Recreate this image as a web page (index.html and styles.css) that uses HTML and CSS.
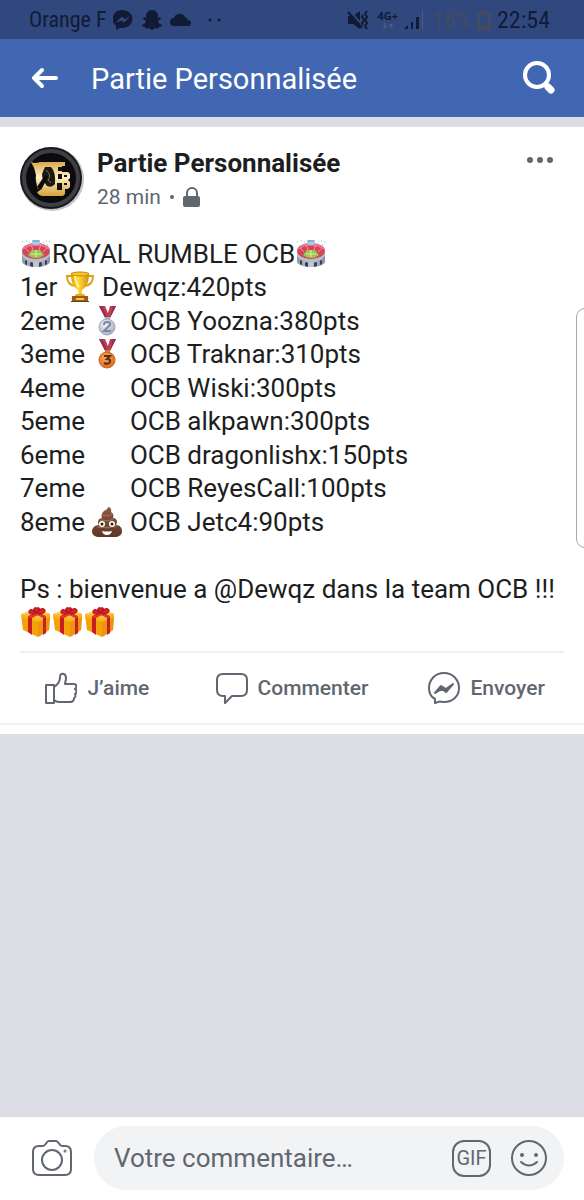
FILE: index.html
```html
<!DOCTYPE html>
<html lang="fr">
<head>
<meta charset="utf-8">
<meta name="viewport" content="width=device-width, initial-scale=1">
<title>Partie Personnalisée</title>
<link rel="stylesheet" href="styles.css">
</head>
<body>
<svg class="sprite" aria-hidden="true">
  <defs>
    <linearGradient id="gold" x1="0" x2="1"><stop offset="0" stop-color="#e09a06"/><stop offset=".4" stop-color="#ffe03c"/><stop offset="1" stop-color="#d98b05"/></linearGradient>
    <linearGradient id="logoGold" x1="0" x2="0" y1="0" y2="1"><stop offset="0" stop-color="#d9a84a"/><stop offset=".45" stop-color="#fff0c4"/><stop offset="1" stop-color="#d6a03c"/></linearGradient>
    <linearGradient id="wall" x1="0" x2="1"><stop offset="0" stop-color="#8d97a3"/><stop offset=".5" stop-color="#c3cad2"/><stop offset="1" stop-color="#858f9c"/></linearGradient>
    <radialGradient id="silver" cx=".4" cy=".35" r=".7"><stop offset="0" stop-color="#eef1f7"/><stop offset="1" stop-color="#a5adbd"/></radialGradient>
    <radialGradient id="bronze" cx=".4" cy=".35" r=".7"><stop offset="0" stop-color="#ffa54d"/><stop offset="1" stop-color="#d9691c"/></radialGradient>
    <linearGradient id="brown" x1="0" x2="0" y1="0" y2="1"><stop offset="0" stop-color="#8e5b42"/><stop offset="1" stop-color="#5f3625"/></linearGradient>
  </defs>
  <symbol id="stadium" viewBox="0 0 32 32">
    <path d="M2 14v10c1 3 7 5 14 5s13-2 14-5V14z" fill="url(#wall)"/>
    <ellipse cx="16" cy="13" rx="14" ry="8" fill="#d5455c"/>
    <path d="M2 13c0-4 6-8 14-8s14 4 14 8c-2-3-7-5-14-5S4 10 2 13z" fill="#ec7486"/>
    <path d="M5 10l4 4M11 6l2 6M21 6l-2 6M27 10l-4 4" stroke="#f0939f"/>
    <path d="M8 17l4-5h8l4 5c-2 2-5 3-8 3s-6-1-8-3z" fill="#9cc653"/>
    <path d="M11 16h10M16 12v7" stroke="#d6f09a"/>
    <path d="M2 14c1 4 7 7 14 7s13-3 14-7v3c-1 4-7 7-14 7S3 21 2 17z" fill="#b7bec8"/>
    <path d="M5 26v-3q1-2 2 0v4zM10 28v-3q2-2 3 0v4zM19 29v-4q2-2 3 0v3zM25 27v-4q1-2 2 0v3z" fill="#35415a"/>
    <path d="M12 2h8v4q-4 2-8 0z" fill="#a7cde6"/><path d="M13 2h6v2h-6z" fill="#7fb3d8"/>
    <path d="M2 4h1M6 3h1M26 3h1M29 4h1M4 8h1M27 7h1M9 4h1M23 4h1" stroke="#6cc9be"/>
  </symbol>
  <symbol id="gift" viewBox="0 0 32 32">
    <path d="M1 9l17-5 12 4-1 16-11 7L3 24z" fill="#f4a20b"/>
    <path d="M18 13l12-4-1 15-11 7z" fill="#e9960c"/>
    <path d="M1 8l15-5 14 5-12 5z" fill="#ffc83a"/>
    <path d="M1 8l17 5v3L1 11zM18 13l12-5v3l-12 5z" fill="#ffb31c"/>
    <path d="M8 10l4 2v17l-4-3zM23 12l3-2v17l-3 2z" fill="#c91d22"/>
    <path d="M8 10l12-6 4 2-12 6zM9 5l4-1 13 6-3 2z" fill="#e43230"/>
    <path d="M16 7C12 9 8 8 9 5c1-3 5-1 7 2zM17 7c1-4 7-6 8-3s-4 5-8 3zM15 6c-3-4 0-5 2-4 2-1 4 0 1 4z" fill="#d91f2a" stroke="#a3141e"/>
  </symbol>
</svg>

<header class="top">
  <div class="status">
    <span class="carrier">Orange F</span>
    <svg class="s-chat" viewBox="0 0 20 20"><path d="M10 0a10 9 0 0 0-7 15.800V20l4-2.300A10 9 0 1 0 10 0z" fill="currentColor"/><path d="M4 12l5-5 3 3 4-3-5 5-3-2z" fill="#30487e" stroke="#30487e"/></svg>
    <svg class="s-ghost" viewBox="0 0 20 20"><path d="M10 0C6 0 4 3 4 6v2L2 7 1 9l3 2c0 2-2 3-4 4 0 2 2 2 3 2l1 2 3-1c1 1 2 2 3 2s2-1 3-2l3 1 1-2c1 0 3 0 3-2-2-1-4-2-4-4l3-2-1-2-2 1V6c0-3-2-6-6-6z" fill="currentColor"/></svg>
    <svg class="s-cloud" viewBox="0 0 22 14"><path d="M4 13a4 4 0 0 1 0-8 6 6 0 0 1 11-1 5 5 0 0 1 3 3 3 3 0 0 1 0 6z" fill="currentColor"/></svg>
    <svg class="s-dots" viewBox="0 0 14 4"><circle cx="2" cy="2" r="1.600" fill="currentColor"/><circle cx="11" cy="2" r="1.600" fill="currentColor"/></svg>
    <span class="grow"></span>
    <svg class="s-mute" viewBox="0 0 22 20"><path d="M1 6h5l7-5v18l-7-5H1z" fill="currentColor"/><path d="M2 0l15 17" stroke="#30487e" stroke-width="2"/><path d="M1 2l14 16" stroke="currentColor" stroke-width="2"/><path d="M16 5l-1 2 2 3-2 3 1 2M20 1l-2 3 2 3-2 3 2 3-2 3 2 3" fill="none" stroke="currentColor" stroke-width="2"/></svg>
    <span class="network">4G+<svg viewBox="0 0 12 6"><path d="M3 0v5M1 3l2 2 2-2M9 6V1M7 3l2-2 2 2" stroke="#53638b" fill="none"/></svg></span>
    <svg class="s-signal" viewBox="0 0 20 20"><path d="M0 19l4-4v4zM7 12h2v7H7zM12 7h3v12h-3z" fill="currentColor"/><path d="M18 1h1v18h-1z" fill="#4c5b80"/></svg>
    <span class="percent">18%</span>
    <svg class="s-battery" viewBox="0 0 14 20"><path d="M4 0h6v2h4v18H0V2h4zM3 5v10h8V5z" fill="#434b63" fill-rule="evenodd"/></svg>
    <time class="clock">22:54</time>
  </div>
  <nav class="bar">
    <button class="icon-btn" aria-label="Retour"><svg class="back" viewBox="0 0 28 22"><path d="M11 3L3 11l8 8M4 11h21" fill="none" stroke="#fff" stroke-width="4" stroke-linecap="round" stroke-linejoin="round"/></svg></button>
    <h1>Partie Personnalisée</h1>
    <button class="icon-btn" aria-label="Rechercher"><svg class="search" viewBox="0 0 34 34"><circle cx="15" cy="14" r="12" fill="none" stroke="#fff" stroke-width="4"/><path d="M22 22l3 3" stroke="#fff" stroke-width="4"/><path d="M26 26l3 3" stroke="#fff" stroke-width="7" stroke-linecap="round"/></svg></button>
  </nav>
</header>

<main class="feed">
  <article class="post">
    <div class="author">
      <svg class="avatar" viewBox="0 0 64 64" role="img" aria-label="OCB"><circle cx="32" cy="32" r="32" fill="#c3c5c9"/><circle cx="31" cy="31" r="31" fill="#17181b"/><circle cx="31" cy="31" r="27" fill="#0b0b0d" stroke="#3d3f44" stroke-width="4"/><path d="M11 15q4 2 9 0h25v4h-3v6h6l2 2v4l-2 2 2 2v5l-2 2h-3v5l-2 2H23q-4 0-6-4 4-1 4-6l-3 3q-3-9-2-14-1-7-5-13z" fill="url(#logoGold)"/><path d="M25 20h6q5 5 4 17-3 4-8 2-5-6-5-12z" fill="#1b1914"/><path d="M17 40l8-12 3 2-7 13z" fill="#0b0b0d"/><path d="M26 23q6 5 2 10l3 3" fill="none" stroke="#81765b"/><path d="M38 20h4v4h-4zM38 27h4v5h-4zM37 36h5v7h-5zM44 28h3v2h-3zM44 36h3v2h-3z" fill="#111"/></svg>
      <div class="who">
        <h2>Partie Personnalisée</h2>
        <div class="meta">28 min <span class="dot"></span><svg class="lock" viewBox="0 0 18 20"><path d="M4 10V6a5 5 0 0 1 10 0v4" fill="none" stroke="#616770" stroke-width="2"/><rect y="9" width="17" height="11" rx="2" fill="#616770"/></svg></div>
      </div>
      <button class="icon-btn more" aria-label="Plus"><svg viewBox="0 0 26 6"><circle cx="3" cy="3" r="3"/><circle cx="13" cy="3" r="3"/><circle cx="23" cy="3" r="3"/></svg></button>
    </div>

    <div class="message">
      <p><svg class="emoji"><use href="#stadium"/></svg>ROYAL RUMBLE OCB<svg class="emoji"><use href="#stadium"/></svg></p>
      <p>1er <svg class="emoji" viewBox="0 0 32 32"><path d="M8 5H3q0 9 8 10M24 5h5q0 9-8 10" fill="none" stroke="#dda211" stroke-width="2"/><path d="M7 2h18c0 9-2 14-7 17v6h-4v-6C9 16 7 11 7 2z" fill="url(#gold)"/><ellipse cx="16" cy="3" rx="9" ry="2" fill="#f6c526" stroke="#c9880a"/><path d="M11 5q1 8 4 11" stroke="#fff6a0" stroke-width="2" fill="none"/><path d="M12 23h8l2 3H10z" fill="#eaa91d"/><path d="M8 25h16v6H8z" fill="#9b5a18"/><path d="M12 27h8v2h-8z" fill="#f7cb47"/><path d="M7 30h18v1H7z" fill="#6b3b11"/></svg> Dewqz:420pts</p>
      <p>2eme <svg class="emoji" viewBox="0 0 32 32"><path d="M8 1h6l3 7 2-7h6l-6 12h-5z" fill="#b93f58"/><path d="M8 1h3l5 11h-2zM22 1h3l-6 12" fill="#9a2c48"/><path d="M14 12h5v3h-5z" fill="#a5adbd"/><circle cx="16" cy="22" r="8" fill="url(#silver)" stroke="#a3abbb"/><path d="M13 20q0-3 3-3 4 0 3 3l-6 6h7" fill="none" stroke="#7c879f" stroke-width="2"/></svg> OCB Yoozna:380pts</p>
      <p>3eme <svg class="emoji" viewBox="0 0 32 32"><path d="M8 1h6l3 7 2-7h6l-6 12h-5z" fill="#b93f58"/><path d="M8 1h3l5 11h-2zM22 1h3l-6 12" fill="#9a2c48"/><path d="M14 12h5v3h-5z" fill="#d87a2c"/><circle cx="16" cy="22" r="8" fill="url(#bronze)" stroke="#c9652a"/><path d="M13 18h6l-3 3q4 0 3 3-2 3-6 1" fill="none" stroke="#59301f" stroke-width="2"/></svg> OCB Traknar:310pts</p>
      <p>4eme <span class="emoji"></span> OCB Wiski:300pts</p>
      <p>5eme <span class="emoji"></span> OCB alkpawn:300pts</p>
      <p>6eme <span class="emoji"></span> OCB dragonlishx:150pts</p>
      <p>7eme <span class="emoji"></span> OCB ReyesCall:100pts</p>
      <p>8eme <svg class="emoji" viewBox="0 0 32 32"><path d="M17 1c0 3-5 3-6 7-1 2 0 4 0 4-4 0-5 5-3 7-5 0-7 4-7 6 0 4 3 6 8 6h14c5 0 8-2 8-6 0-3-2-6-6-6 2-3 1-7-3-7 1-3 0-5-2-6 1-3-1-5-3-5z" fill="url(#brown)"/><path d="M12 9q6 2 9-1M9 14q9 2 13-1M6 21q10 2 20-1" fill="none" stroke="#a5745a"/><circle cx="11" cy="18" r="3" fill="#fff"/><circle cx="21" cy="18" r="3" fill="#fff"/><circle cx="11" cy="18" r="1.500" fill="#222"/><circle cx="21" cy="18" r="1.500" fill="#222"/><path d="M11 25q5 1 10 0-1 4-5 4t-5-4z" fill="#fff"/></svg> OCB Jetc4:90pts</p>
      <p class="blank"></p>
      <p>Ps : bienvenue a @Dewqz dans la team OCB !!!</p>
      <p><svg class="emoji"><use href="#gift"/></svg><svg class="emoji"><use href="#gift"/></svg><svg class="emoji"><use href="#gift"/></svg></p>
    </div>
  </article>
  <div class="actions">
    <button><svg viewBox="0 0 32 32"><path d="M1 13h8v18H1zM9 15c5-3 6-6 6-10 0-5 6-4 6 1 0 3-1 4-1 6h9c3 0 3 4 1 5 2 1 2 4 0 5 1 2 0 4-1 4 0 3-1 4-4 4H14c-2 0-4-1-5-2"/></svg>J’aime</button>
    <button><svg viewBox="0 0 32 32"><path d="M7 2h18q6 0 6 6v10q0 6-6 6h-9l-7 7v-7H7q-6 0-6-6V8q0-6 6-6z"/></svg>Commenter</button>
    <button><svg viewBox="0 0 32 32"><path d="M16 1c9 0 15 7 15 15s-6 14-15 14c-3 0-4-1-6 0l-3 1v-4C3 25 1 21 1 16 1 8 7 1 16 1z"/><path class="solid" d="M7 21l6-7 5 3 7-5-7 8-4-3z"/></svg>Envoyer</button>
  </div>
</main>

<footer class="composer">
  <button class="icon-btn" aria-label="Photo"><svg class="camera" viewBox="0 0 40 36"><path d="M7 6h4c3 0 3-5 6-5h7c3 0 3 5 6 5h3q6 0 6 6v17q0 6-6 6H7q-6 0-6-6V12q0-6 6-6z"/><circle cx="20" cy="20" r="10"/><circle class="solid" cx="33" cy="11" r=".5"/></svg></button>
  <div class="field">
    <input type="text" aria-label="Votre commentaire" placeholder="Votre commentaire…">
    <button class="gif">GIF</button>
    <button class="icon-btn" aria-label="Emoji"><svg class="smile" viewBox="0 0 38 38"><circle cx="19" cy="19" r="17"/><circle class="solid" cx="12" cy="16" r="1"/><circle class="solid" cx="26" cy="16" r="1"/><path d="M11 23q8 7 16 0"/></svg></button>
  </div>
</footer>
<aside class="edge" aria-hidden="true"></aside>
</body>
</html>
```
FILE: styles.css
```css
* { box-sizing: border-box; }
body {
  margin: 0;
  min-height: 100vh;
  display: flex;
  flex-direction: column;
  position: relative;
  overflow-x: hidden;
  background: #dddde6;
  color: #1c1e21;
  font-family: Roboto, "Liberation Sans", sans-serif;
}
h1, h2, p { margin: 0; }
button { border: 0; padding: 0; background: none; font: inherit; color: inherit; }
svg { flex: none; }
.sprite { position: absolute; width: 0; height: 0; }
.icon-btn { display: flex; align-items: center; }

.status {
  display: flex;
  align-items: center;
  height: 39px;
  padding: 0 34px 0 29px;
  background: #30487e;
  color: #121b35;
  font-family: "Roboto Condensed", Roboto, sans-serif;
  font-size: 22px;
}
.grow { flex: 1; }
.s-chat { width: 20px; height: 20px; margin-left: 7px; }
.s-ghost { width: 20px; height: 20px; margin-left: 9px; }
.s-cloud { width: 22px; height: 14px; margin-left: 8px; }
.s-dots { width: 14px; height: 4px; margin-left: 16px; }
.s-mute { width: 22px; height: 20px; }
.network { display: flex; flex-direction: column; align-items: center; margin-left: 9px; font: 700 11px/11px "Open Sans", sans-serif; }
.network svg { width: 12px; height: 6px; margin-top: 2px; }
.s-signal { width: 20px; height: 20px; margin-left: 6px; }
.percent { margin-left: 8px; color: #434b63; font-size: 24px; }
.s-battery { width: 14px; height: 20px; margin-left: 6px; }
.clock { margin-left: 6px; font-size: 24px; }

.bar {
  display: flex;
  align-items: center;
  height: 78px;
  padding: 0 28px 0 31px;
  background: #4267b2;
  color: #fff;
}
.bar h1 { flex: 1; margin-left: 32px; padding-top: 2px; font-size: 29px; font-weight: 400; line-height: 36px; }
.back { width: 28px; height: 22px; }
.search { width: 34px; height: 34px; }

.feed { margin-top: 10px; background: #fff; padding-bottom: 9px; }
.post { padding: 19px 20px 0; }
.author { display: flex; align-items: flex-start; gap: 13px; }
.avatar { width: 64px; height: 66px; }
.who { flex: 1; }
.who h2 { font-size: 26px; font-weight: 700; line-height: 34px; }
.meta { display: flex; align-items: center; font-size: 21px; line-height: 34px; color: #616770; }
.dot { width: 4px; height: 4px; border-radius: 50%; background: #616770; margin: 0 9px; }
.lock { width: 18px; height: 20px; }
.more { padding: 11px 10px; }
.more svg { width: 28px; height: 6px; fill: #616770; }

.message {
  margin-top: 24px;
  padding-bottom: 11px;
  border-bottom: 2px solid #f0f0f2;
  font-size: 26px;
  line-height: 33px;
}
.message p:nth-child(even) { padding-bottom: 1px; }
.message .blank { height: 34px; }
.emoji { display: inline-block; width: 32px; height: 32px; vertical-align: top; }

.actions { display: grid; grid-template-columns: repeat(3, 1fr); border-bottom: 2px solid #f0f0f2; }
.actions button {
  display: flex;
  align-items: center;
  justify-content: center;
  gap: 10px;
  height: 70px;
  color: #616770;
  font-size: 21px;
  font-weight: 500;
}
.actions svg { width: 32px; height: 32px; }
.actions svg, .camera, .smile { fill: none; stroke: #616770; stroke-width: 2; stroke-linejoin: round; stroke-linecap: round; }
.actions .solid, .composer .solid { fill: #616770; }

.composer {
  display: flex;
  align-items: center;
  gap: 22px;
  margin-top: auto;
  padding: 9px 20px 10px 32px;
  background: #fff;
  color: #616770;
}
.camera { width: 40px; height: 36px; }
.smile { width: 38px; height: 38px; }
.field {
  flex: 1;
  min-width: 0;
  display: flex;
  align-items: center;
  gap: 19px;
  height: 64px;
  padding: 0 16px 0 20px;
  border-radius: 32px;
  background: #f2f3f5;
}
.field input {
  flex: 1;
  min-width: 0;
  padding: 0;
  border: 0;
  outline: 0;
  background: none;
  font: 400 26px/34px Roboto, sans-serif;
  color: #1c1e21;
}
.field input::placeholder { color: #616770; opacity: 1; }
.gif { width: 39px; height: 37px; border: 2px solid #616770; border-radius: 12px; font-size: 20px; line-height: 33px; }

.edge {
  position: absolute;
  top: 308px;
  right: -10px;
  width: 18px;
  height: 240px;
  border: 1px solid #a8a8a8;
  border-radius: 10px;
  background: #fff;
}
```
